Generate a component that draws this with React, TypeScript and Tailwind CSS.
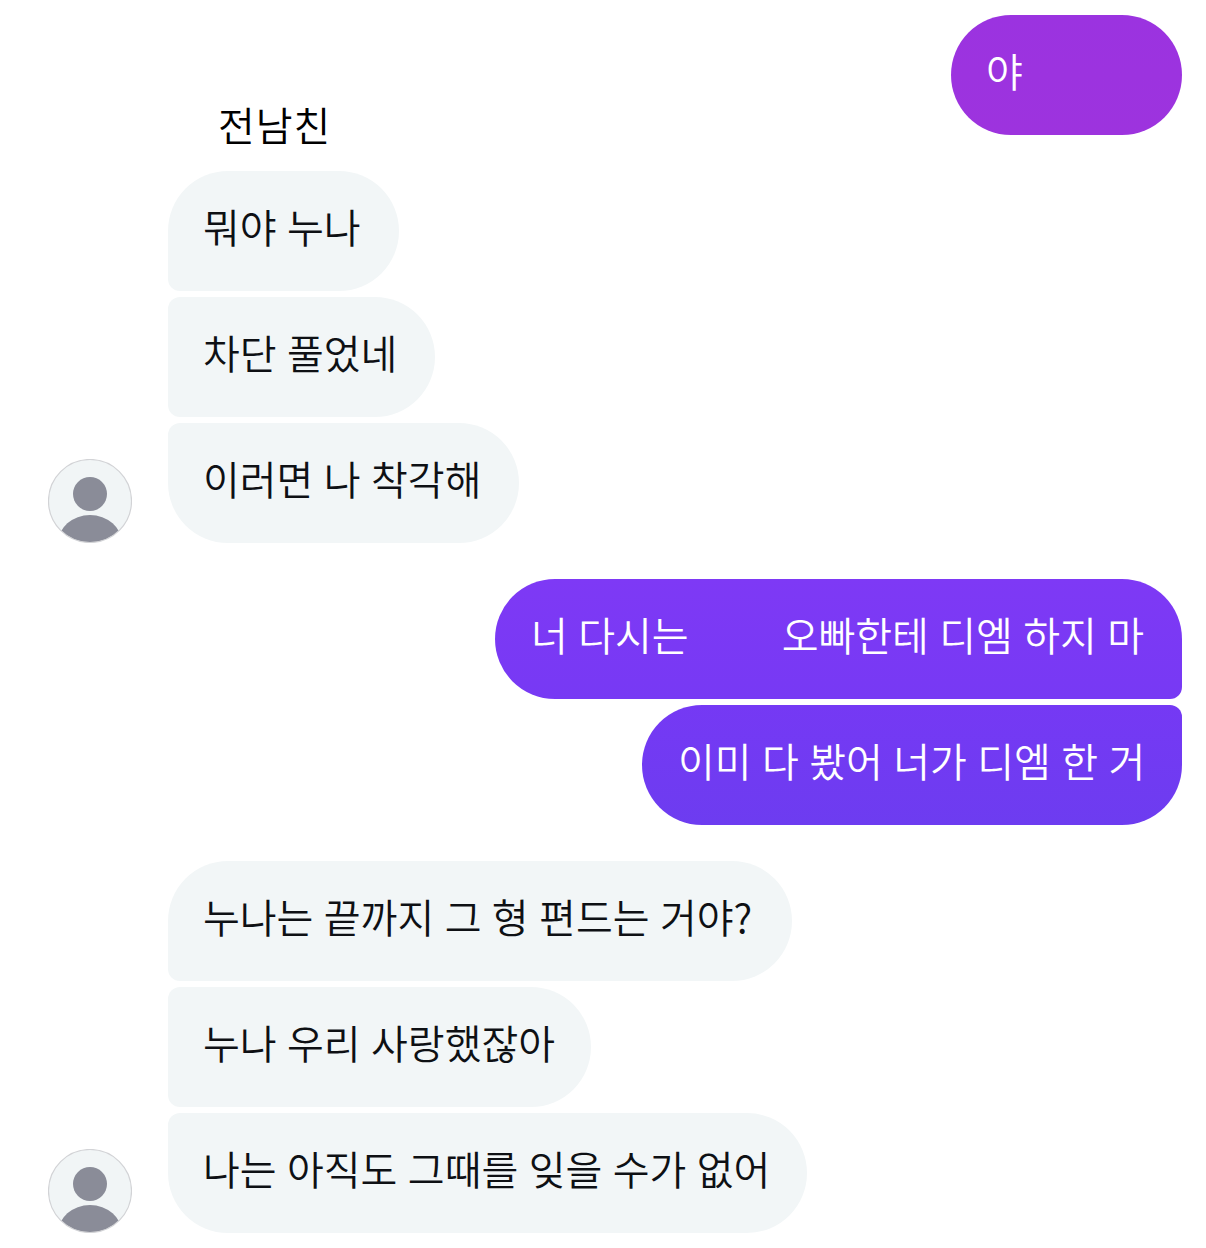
const font = { fontFamily: '"Noto Sans CJK KR", sans-serif' };

function Avatar() {
  return (
    <svg width="84" height="84" viewBox="0 0 84 84" className="shrink-0 block">
      <defs>
        <clipPath id="avatar-clip">
          <circle cx="42" cy="42" r="41.5" />
        </clipPath>
      </defs>
      <circle cx="42" cy="42" r="41.5" fill="#f1f5f6" />
      <g clipPath="url(#avatar-clip)">
        <circle cx="42" cy="35" r="17" fill="#8a8c98" />
        <ellipse cx="42" cy="84" rx="32" ry="28" fill="#8a8c98" />
      </g>
      <circle cx="42" cy="42" r="41.5" fill="none" stroke="#d2d3d6" strokeWidth="1.2" />
    </svg>
  );
}

function Incoming({ text, corner, width }: { text: string; corner: string; width: string }) {
  return (
    <div className={`h-[120px] pl-[35px] pt-[28px] bg-[#f2f6f7] text-[#0e1014] text-[40px] font-[350] leading-[54px] whitespace-nowrap [word-spacing:1.5px] ${corner} ${width}`}>
      {text}
    </div>
  );
}

function Group({ items }: { items: { text: string; corner: string; width: string }[] }) {
  return (
    <div className="flex items-end">
      <div className="w-[168px] pl-12 shrink-0">
        <Avatar />
      </div>
      <div className="flex flex-col gap-[6px]">
        {items.map((m) => (
          <Incoming key={m.text} {...m} />
        ))}
      </div>
    </div>
  );
}

export default function App() {
  return (
    <div className="w-[1206px] h-[1248px] bg-white overflow-hidden pt-[15px] flex flex-col" style={font}>
      <div className="flex justify-end pr-6">
        <div className="w-[231px] h-[120px] rounded-[60px] pl-[35px] pt-[28px] bg-gradient-to-b from-[#9b33e0] to-[#9d33de] text-white text-[40px] font-[350] leading-[54px]">
          야
        </div>
      </div>

      <div className="-mt-[38px] pl-[218px] h-[74px] text-[40px] font-[350] leading-[54px] text-black tracking-[1px]">
        전남친
      </div>

      <Group
        items={[
          { text: "뭐야 누나", corner: "rounded-[60px] rounded-bl-[12px]", width: "w-[231px]" },
          { text: "차단 풀었네", corner: "rounded-[60px] rounded-tl-[12px] rounded-bl-[12px]", width: "w-[267px]" },
          { text: "이러면 나 착각해", corner: "rounded-[60px] rounded-tl-[12px]", width: "w-[351px]" },
        ]}
      />

      <div className="flex flex-col items-end gap-[6px] pr-6 mt-9">
        <div className="w-[687px] h-[120px] pl-9 pt-[28px] rounded-[60px] rounded-br-[12px] bg-gradient-to-b from-[#7e39f5] to-[#7739f4] text-white text-[40px] font-[350] leading-[54px] whitespace-nowrap [word-spacing:1.5px]">
          너 다시는<span className="inline-block w-[93px]" />오빠한테 디엠 하지 마
        </div>
        <div className="w-[540px] h-[120px] pl-9 pt-[28px] rounded-[60px] rounded-tr-[12px] bg-gradient-to-b from-[#7539f4] to-[#6d3cf0] text-white text-[40px] font-[350] leading-[54px] whitespace-nowrap [word-spacing:1.5px]">
          이미 다 봤어 너가 디엠 한 거
        </div>
      </div>

      <div className="mt-9">
        <Group
          items={[
            { text: "누나는 끝까지 그 형 편드는 거야?", corner: "rounded-[60px] rounded-bl-[12px]", width: "w-[624px]" },
            { text: "누나 우리 사랑했잖아", corner: "rounded-[60px] rounded-tl-[12px] rounded-bl-[12px]", width: "w-[423px]" },
            { text: "나는 아직도 그때를 잊을 수가 없어", corner: "rounded-[60px] rounded-tl-[12px]", width: "w-[639px]" },
          ]}
        />
      </div>
    </div>
  );
}
